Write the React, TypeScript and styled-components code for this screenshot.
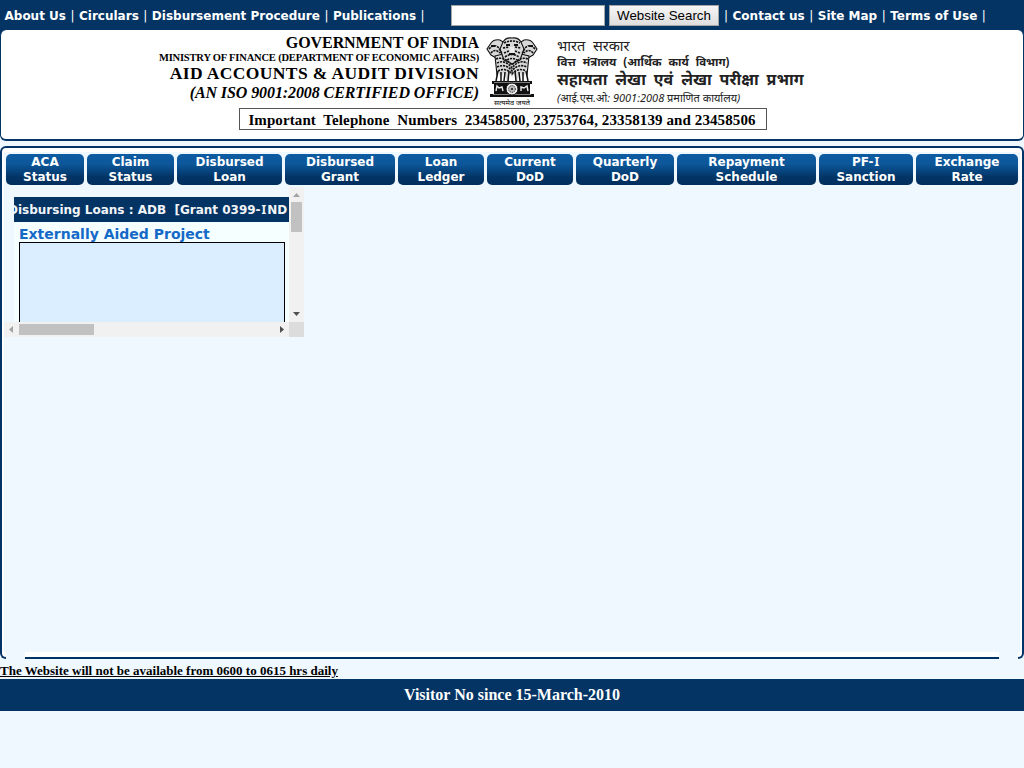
import React from "react";
import styled, { createGlobalStyle } from "styled-components";

const navy = "#043464";
const pale = "#eff7ff";

const Global = createGlobalStyle`
  * { box-sizing: border-box; }
  body { margin: 0; background: ${pale}; font-family: "DejaVu Sans", sans-serif; color: #000; }
`;

const Page = styled.div`
  width: 1024px;
  height: 768px;
  overflow: hidden;
`;

const TopBar = styled.nav`
  height: 30px;
  display: flex;
  align-items: center;
  background: ${navy};
  color: #fff;
  font-size: 12px;
  line-height: 32px;
  white-space: pre;
`;

const LinkGroup = styled.div<{ $start: number; $width: number }>`
  flex: none;
  width: ${(p) => p.$width}px;
  padding-left: ${(p) => p.$start}px;
  height: 30px;
`;

const NavLink = styled.a`
  font-weight: bold;
`;

const Divider = styled.span`
  margin: 0 4.5px;
`;

const SearchInput = styled.input`
  width: 154px;
  height: 21px;
  margin: 0 4px 0 0;
  border: 1px solid #a5a5a5;
  background: #fff;
  padding: 0;
`;

const SearchButton = styled.button`
  width: 110px;
  height: 21px;
  padding: 0;
  border: 1px solid #a5a5a5;
  border-radius: 0;
  background: linear-gradient(#f6f6f6, #dedede);
  font: 13.33px/20px "Liberation Sans", sans-serif;
  color: #000;
`;

const HeaderFrame = styled.div`
  background: linear-gradient(${navy} 50%, ${pale} 50%);
`;

const Header = styled.header`
  height: 111px;
  background: #fff;
  border: 1px solid ${navy};
  border-top: 0;
  border-bottom-width: 2px;
  border-radius: 6px;
  padding-top: 4px;
`;

const HeaderRow = styled.div`
  display: flex;
  height: 74px;
`;

const English = styled.div`
  width: 478px;
  display: flex;
  flex-direction: column;
  align-items: flex-end;
  font-family: "Liberation Serif", serif;
  font-weight: bold;
`;

const HeadLine = styled.div<{ $size: number; $h: number; $track?: number; $words?: number; $italic?: boolean }>`
  height: ${(p) => p.$h}px;
  line-height: ${(p) => p.$h}px;
  font-size: ${(p) => p.$size}px;
  letter-spacing: ${(p) => p.$track ?? 0}px;
  word-spacing: ${(p) => p.$words ?? 0}px;
  font-style: ${(p) => (p.$italic ? "italic" : "normal")};
  white-space: nowrap;
`;

const EmblemBox = styled.div`
  width: 78px;
  padding: 3px 0 0 7px;
`;

const Hindi = styled.div`
  padding-top: 3px;
  color: #222;
  font-family: "Noto Sans", "Noto Sans Devanagari", "Lohit Devanagari", sans-serif;
`;

const Phone = styled.div`
  width: 528px;
  height: 22px;
  margin: 0 0 0 238px;
  padding-right: 2px;
  border: 1px solid #555;
  text-align: center;
  font: bold 15px/22px "Liberation Serif", serif;
  letter-spacing: 0.1px;
  white-space: pre;
`;

const Main = styled.main`
  height: 506px;
  margin-top: 5px;
  border: 2px solid #003366;
  border-bottom: 0;
  border-radius: 6px 6px 0 0;
  background: #fff;
  padding: 4px 2px 0;
`;

const MainBody = styled.div`
  height: 500px;
  background: ${pale};
`;

const Menu = styled.div`
  display: flex;
  gap: 3px;
  padding: 2px 0 0 2px;
`;

const MenuButton = styled.a<{ $w: number }>`
  flex: none;
  width: ${(p) => p.$w}px;
  height: 31px;
  padding-top: 1px;
  border-radius: 5px;
  background: linear-gradient(#0d5ca2 0, #0d579a 32%, #023465 75%, #022f5d 100%);
  color: #fff;
  font-size: 12px;
  font-weight: bold;
  line-height: 15px;
  text-align: center;
  white-space: pre-line;
`;

const BarredI = styled.span`
  display: inline-block;
  width: 6.6px;
  font-family: "Noto Sans", sans-serif;
  line-height: 1;
  text-align: center;
`;

const Frame = styled.section`
  display: grid;
  grid-template: 135px 15px / 285px 15px;
  width: 300px;
  margin-top: 2px;
`;

const FrameView = styled.div`
  overflow: hidden;
  padding: 10px 0 0 10px;
`;

const FrameContent = styled.div`
  height: 125px;
  background: #f5ffff;
`;

const Ticker = styled.div`
  height: 25px;
  overflow: hidden;
  background: ${navy};
  color: #f2f5f8;
  font-size: 12px;
  font-weight: bold;
  line-height: 27px;
  white-space: pre;
`;

const TickerText = styled.span`
  margin-left: -6px;
`;

const ProjectTitle = styled.h2`
  margin: 0;
  height: 20px;
  padding-left: 5px;
  color: #1569c7;
  font-size: 14px;
  line-height: 24px;
`;

const ProjectBox = styled.div`
  width: 266px;
  height: 80px;
  margin-left: 5px;
  border: 1px solid #000;
  border-bottom: 0;
  background: #dbeeff;
`;

const Bar = styled.div<{ $vertical?: boolean }>`
  display: flex;
  flex-direction: ${(p) => (p.$vertical ? "column" : "row")};
  align-items: center;
  background: #f1f1f1;
`;

const Thumb = styled.div<{ $vertical?: boolean }>`
  width: ${(p) => (p.$vertical ? 11 : 75)}px;
  height: ${(p) => (p.$vertical ? 30 : 11)}px;
  background: #c1c1c1;
`;

const Arrow = styled.svg<{ $end?: boolean }>`
  flex: none;
  margin: ${(p) => (p.$end ? "auto 0 0 auto" : "0")};
`;

const Corner = styled.div`
  background: #dcdcdc;
`;

const BottomEdge = styled.div`
  display: flex;
  justify-content: space-between;
  height: 7px;
`;

const EdgeCorner = styled.div<{ $right?: boolean }>`
  width: 6px;
  background: linear-gradient(#fff, #fff) ${(p) => (p.$right ? "right" : "left")} / 4px 100% no-repeat;
  border: 0 solid #003366;
  border-bottom-width: 2px;
  ${(p) => (p.$right ? "border-right-width: 2px; border-bottom-right-radius: 6px;" : "border-left-width: 2px; border-bottom-left-radius: 6px;")}
`;

const EdgeLine = styled.div`
  width: 974px;
  background: #fff;
  border-bottom: 2px solid #003366;
`;

const Notice = styled.p`
  margin: 0;
  height: 20px;
  font: bold 13px/24px "Liberation Serif", serif;
  text-decoration: underline;
`;

const Visitors = styled.footer`
  height: 32px;
  background: ${navy};
  color: #fff;
  text-align: center;
  font: bold 16px/32px "Liberation Serif", serif;
`;

const Emblem = () => (
  <svg width="52" height="70" viewBox="0 0 52 70">
    <g fill="#d8d8d8" stroke="#111" strokeWidth="1.1">
      <path d="M5 6Q8 2 14 3L20 7 17 19 10 21 5 18 1 12Z" />
      <path d="M47 6Q44 2 38 3L32 7 35 19 42 21 47 18 51 12Z" />
      <path d="M9 19L17 17 26 26 35 17 43 19 41 38 37 44H15L11 38Z" />
      <path d="M17 5Q20 0 26 1Q32 0 35 5L38 12 34 23 26 27 18 23 14 12Z" />
    </g>
    <g fill="none" stroke="#111" strokeWidth="1.6" strokeDasharray="2.2 0.9">
      <path d="M3 12Q8 6 13 11L16 17M5 16Q9 11 14 16M49 12Q44 6 39 11L36 17M47 16Q43 11 38 16M18 6Q26 2 34 6M17 11L23 10M29 10L35 11M18 16L23 14M29 14L34 16M19 20Q26 15 33 20M21 23Q26 20 31 23" />
      <path d="M10 22Q18 19 26 28Q34 19 42 22M11 26Q19 22 26 31Q33 22 41 26M11 30Q20 26 26 34Q32 26 41 30M12 34Q20 30 26 37Q32 30 40 34" />
    </g>
    <path d="M20 8H24M28 8H32M23 17H29M5 9H9M43 9H47" stroke="#111" strokeWidth="1.8" />
    <path d="M25 10V16M27 10V16" stroke="#fff" strokeWidth="1" />
    <path d="M12 35L10 45H42L40 35 37 41 34 36 31 44 28 36 26 41 24 36 21 44 18 36 15 41Z" fill="#fff" />
    <path d="M12 34L10 44M15 35L15 44M19 35L18 44M23 34L22 44M29 34L30 44M33 35L34 44M37 35L37 44M40 34L42 44" stroke="#111" strokeWidth="1.5" />
    <path d="M6 44H46V47H44V57H48V60H4V57H8V47H6Z" fill="#111" />
    <path d="M8 45.5H44M7 57.5H45" stroke="#999" strokeWidth="0.8" />
    <path d="M10 54L11 49 13 51 16 50 17 54M35 54V50L38 51 41 49 42 54" stroke="#eee" strokeWidth="1.4" fill="none" />
    <circle cx="26" cy="52" r="6" fill="#eee" stroke="#111" />
    <circle cx="26" cy="52" r="3.4" fill="#bbb" stroke="#111" strokeDasharray="1 1" />
    <circle cx="26" cy="52" r="1" fill="#111" />
    <text x="8" y="68" fontSize="7" fontFamily="Noto Sans, sans-serif" textLength="36" lengthAdjust="spacingAndGlyphs">सत्यमेव जयते</text>
  </svg>
);

const menu: [string, number][] = [
  ["ACA\nStatus", 78], ["Claim\nStatus", 87], ["Disbursed\nLoan", 105], ["Disbursed\nGrant", 110],
  ["Loan\nLedger", 86], ["Current\nDoD", 86], ["Quarterly\nDoD", 98], ["Repayment\nSchedule", 139],
  ["PF-I\nSanction", 94], ["Exchange\nRate", 102],
];

const withBarredI = (text: string) =>
  text.split("I").map((part, i) => (
    <React.Fragment key={i}>
      {i > 0 && <BarredI>I</BarredI>}
      {part}
    </React.Fragment>
  ));

export default function App() {
  return (
    <Page>
      <Global />
      <TopBar>
        <LinkGroup $start={4.5} $width={451}>
          <NavLink>About Us</NavLink><Divider>|</Divider><NavLink>Circulars</NavLink><Divider>|</Divider><NavLink>Disbursement Procedure</NavLink><Divider>|</Divider><NavLink>Publications</NavLink><Divider>|</Divider>
        </LinkGroup>
        <SearchInput aria-label="Search" />
        <SearchButton>Website Search</SearchButton>
        <LinkGroup $start={0.5} $width={305}>
          <Divider>|</Divider><NavLink>Contact us</NavLink><Divider>|</Divider><NavLink>Site Map</NavLink><Divider>|</Divider><NavLink>Terms of Use</NavLink><Divider>|</Divider>
        </LinkGroup>
      </TopBar>
      <HeaderFrame>
        <Header>
          <HeaderRow>
            <English>
              <HeadLine $size={16} $h={17} $track={-0.08}>GOVERNMENT OF INDIA</HeadLine>
              <HeadLine $size={10.5} $h={13} $track={-0.18}>MINISTRY OF FINANCE (DEPARTMENT OF ECONOMIC AFFAIRS)</HeadLine>
              <HeadLine $size={17.5} $h={19} $track={0.38}>AID ACCOUNTS &amp; AUDIT DIVISION</HeadLine>
              <HeadLine $size={16} $h={19} $track={-0.09} $italic>(AN ISO 9001:2008 CERTIFIED OFFICE)</HeadLine>
            </English>
            <EmblemBox><Emblem /></EmblemBox>
            <Hindi>
              <HeadLine $size={14.5} $h={17} $words={4}>भारत सरकार</HeadLine>
              <HeadLine $size={11.5} $h={16} $words={4}><b>वित्त मंत्रालय (आर्थिक कार्य विभाग)</b></HeadLine>
              <HeadLine $size={16} $h={19} $words={3.8}><b>सहायता लेखा एवं लेखा परीक्षा प्रभाग</b></HeadLine>
              <HeadLine $size={11} $h={17} $italic>(आई.एस.ओ: 9001:2008 प्रमाणित कार्यालय)</HeadLine>
            </Hindi>
          </HeaderRow>
          <Phone>Important  Telephone  Numbers  23458500, 23753764, 23358139 and 23458506</Phone>
        </Header>
      </HeaderFrame>
      <Main>
        <MainBody>
          <Menu>
            {menu.map(([label, w]) => <MenuButton key={label} $w={w}>{withBarredI(label)}</MenuButton>)}
          </Menu>
          <Frame>
            <FrameView>
              <FrameContent>
                <Ticker><TickerText>{withBarredI("Disbursing Loans : ADB  [Grant 0399-IND")}</TickerText></Ticker>
                <ProjectTitle>Externally Aided Project</ProjectTitle>
                <ProjectBox />
              </FrameContent>
            </FrameView>
            <Bar $vertical>
              <Arrow width="15" height="15"><path d="M4 10H11L7.5 6Z" fill="#a3a3a3" /></Arrow>
              <Thumb $vertical />
              <Arrow $end width="15" height="15"><path d="M4 5H11L7.5 9Z" fill="#505050" /></Arrow>
            </Bar>
            <Bar>
              <Arrow width="15" height="15"><path d="M9 4V11L5 7.5Z" fill="#a3a3a3" /></Arrow>
              <Thumb />
              <Arrow $end width="15" height="15"><path d="M6 4V11L10 7.5Z" fill="#505050" /></Arrow>
            </Bar>
            <Corner />
          </Frame>
        </MainBody>
      </Main>
      <BottomEdge><EdgeCorner /><EdgeLine /><EdgeCorner $right /></BottomEdge>
      <Notice>The Website will not be available from 0600 to 0615 hrs daily</Notice>
      <Visitors>Visitor No since 15-March-2010</Visitors>
    </Page>
  );
}
